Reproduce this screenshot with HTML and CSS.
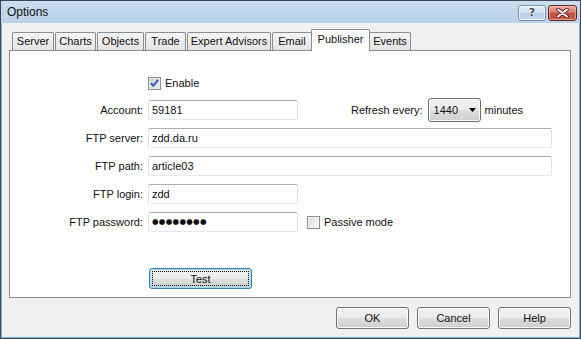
FILE: index.html
```html
<!DOCTYPE html>
<html lang="en">
<head>
<meta charset="utf-8">
<title>Options</title>
<link rel="stylesheet" href="styles.css">
</head>
<body>
<div class="window">
  <div class="titlebar">
    <span class="title">Options</span>
    <div class="title-buttons">
      <div class="tbtn tbtn-help">?</div>
      <div class="tbtn tbtn-close">
        <svg width="13" height="10" viewBox="0 0 13 10">
          <path d="M2 1.5 L11 8.5 M11 1.5 L2 8.5" stroke="#5a1d16" stroke-width="3.6" stroke-linecap="round" fill="none"/>
          <path d="M2 1.5 L11 8.5 M11 1.5 L2 8.5" stroke="#ffffff" stroke-width="2" stroke-linecap="round" fill="none"/>
        </svg>
      </div>
    </div>
  </div>
  <div class="client">
    <div class="tabs">
      <div class="tab tab-server">Server</div>
      <div class="tab tab-charts">Charts</div>
      <div class="tab tab-objects">Objects</div>
      <div class="tab tab-trade">Trade</div>
      <div class="tab tab-experts">Expert Advisors</div>
      <div class="tab tab-email">Email</div>
      <div class="tab tab-publisher selected">Publisher</div>
      <div class="tab tab-events">Events</div>
    </div>
    <div class="panel">
      <div class="row row-check">
        <span class="label"></span>
        <span class="checkbox checked">
          <svg width="11" height="11" viewBox="0 0 11 11"><path d="M2 5.2 L4.3 7.8 L9 1.8" stroke="#3a55a8" stroke-width="1.9" fill="none"/></svg>
        </span>
        <span class="check-text">Enable</span>
      </div>
      <div class="row">
        <span class="label">Account:</span>
        <div class="field short">59181</div>
        <span class="refresh-label">Refresh every:</span>
        <div class="select"><span>1440</span><svg width="7" height="4" viewBox="0 0 7 4"><path d="M0 0 H7 L3.5 4 Z" fill="#000"/></svg></div>
        <span class="minutes">minutes</span>
      </div>
      <div class="row">
        <span class="label">FTP server:</span>
        <div class="field long">zdd.da.ru</div>
      </div>
      <div class="row">
        <span class="label">FTP path:</span>
        <div class="field long">article03</div>
      </div>
      <div class="row">
        <span class="label">FTP login:</span>
        <div class="field short">zdd</div>
      </div>
      <div class="row">
        <span class="label">FTP password:</span>
        <div class="field short password">●●●●●●●●</div>
        <span class="checkbox passive"></span>
        <span class="check-text">Passive mode</span>
      </div>
      <div class="test-row">
        <div class="btn btn-test">Test</div>
      </div>
    </div>
    <div class="footer">
      <div class="btn">OK</div>
      <div class="btn">Cancel</div>
      <div class="btn">Help</div>
    </div>
  </div>
</div>
</body>
</html>
```

FILE: styles.css
```css
* { box-sizing: border-box; }
html, body { margin: 0; padding: 0; }
body {
  width: 581px;
  height: 339px;
  overflow: hidden;
  font-family: "Liberation Sans", Arial, sans-serif;
  font-size: 11px;
  color: #111;
  background: #f0f0f0;
}
.window {
  width: 581px;
  height: 339px;
  border: 1px solid #3d4653;
  display: flex;
  flex-direction: column;
  background: #f0f0f0;
}
.titlebar {
  height: 22px;
  flex: none;
  display: flex;
  justify-content: space-between;
  align-items: flex-start;
  padding: 0 3px 0 6px;
  background: linear-gradient(#cadcf0, #b9d1ea);
}
.title {
  font-size: 12px;
  line-height: 22px;
}
.title-buttons {
  display: flex;
  gap: 2px;
  margin-top: 4px;
}
.tbtn {
  height: 16px;
  border-radius: 3px;
  display: flex;
  align-items: center;
  justify-content: center;
}
.tbtn-help {
  width: 28px;
  border: 1px solid #7e93ad;
  background: linear-gradient(#e3edf8 0%, #cfdff1 50%, #b9cfe8 51%, #c6daee 100%);
  box-shadow: inset 0 0 0 1px rgba(255,255,255,0.6);
  font-family: "DejaVu Sans", sans-serif;
  font-weight: bold;
  font-size: 11px;
  color: #4a4f57;
  text-shadow: 0 0 1px #fff, 0 0 1px #fff;
  line-height: 14px;
}
.tbtn-close {
  width: 29px;
  border: 1px solid #6d2219;
  background: linear-gradient(#e9a99b 0%, #d7806e 45%, #c44d3a 50%, #c95a45 100%);
  box-shadow: inset 0 0 0 1px rgba(255,220,210,0.5);
}
.client {
  flex: 1;
  display: flex;
  flex-direction: column;
  border: 1px solid #72b4e2;
  border-top: none;
  padding: 6px 8px 8px 7px;
}
.tabs {
  height: 21px;
  flex: none;
  display: flex;
  align-items: flex-end;
  gap: 1px;
  padding-left: 3px;
}
.tab {
  height: 18px;
  border: 1px solid #898c95;
  border-bottom: none;
  border-radius: 2px 2px 0 0;
  background: linear-gradient(#f4f4f4, #e4e4e4);
  display: flex;
  align-items: center;
  justify-content: center;
  white-space: nowrap;
  padding-bottom: 1px;
}
.tab-server { width: 42px; }
.tab-charts { width: 41px; }
.tab-objects { width: 47px; }
.tab-trade { width: 41px; }
.tab-experts { width: 84px; }
.tab-email { width: 40px; }
.tab-publisher { width: 55px; }
.tab-events { width: 42px; }
.tab.selected {
  width: 59px;
  height: 22px;
  margin: 0 -2px -1px;
  position: relative;
  z-index: 1;
  background: #fff;
  align-items: flex-start;
  padding: 3px 0 0;
}
.panel {
  height: 248px;
  flex: none;
  border: 1px solid #898c95;
  background: #fff;
  padding-top: 19px;
}
.row {
  display: flex;
  align-items: center;
  height: 28px;
}
.row-check { height: 26px; }
.label {
  width: 133px;
  flex: none;
  text-align: right;
  margin-right: 5px;
}
.field {
  height: 20px;
  border: 1px solid;
  border-color: #abadb3 #dbdfe6 #e3e9ef #e2e3ea;
  border-radius: 2px;
  padding: 0 3px;
  line-height: 18px;
  background: #fff;
  white-space: nowrap;
  overflow: hidden;
}
.field.short { width: 150px; }
.field.long { width: 404px; }
.field.password {
  font-family: "DejaVu Sans", sans-serif;
  font-size: 7.5px;
  letter-spacing: 0.3px;
}
.refresh-label { margin-left: 53px; margin-right: 5px; }
.select {
  width: 53px;
  height: 24px;
  border: 1px solid #707070;
  border-radius: 3px;
  background: linear-gradient(#f2f2f2 0%, #ebebeb 50%, #dddddd 51%, #cfcfcf 100%);
  box-shadow: inset 0 0 0 1px #fbfbfb;
  display: flex;
  align-items: center;
  justify-content: space-between;
  padding: 0 4px 0 5px;
}
.minutes { margin-left: 4px; }
.checkbox {
  width: 13px;
  height: 13px;
  flex: none;
  border: 1px solid #8f8f8f;
  background: linear-gradient(135deg, #dadada, #fbfbfb);
  box-shadow: inset 0 0 0 1px #f2f2f2;
  display: flex;
  align-items: center;
  justify-content: center;
}
.checkbox.checked {
  background: linear-gradient(135deg, #c9ccd2, #eceef1);
  box-shadow: inset 0 0 0 1px #e6e8ea;
}
.checkbox.passive { margin-left: 9px; }
.check-text { margin-left: 4px; }
.test-row {
  margin-top: 32px;
  padding-left: 139px;
}
.btn {
  width: 73px;
  height: 22px;
  border: 1px solid #707070;
  border-radius: 3px;
  background: linear-gradient(#f2f2f2 0%, #ebebeb 50%, #dddddd 51%, #cfcfcf 100%);
  box-shadow: inset 0 0 0 1px #fcfcfc;
  display: flex;
  align-items: center;
  justify-content: center;
}
.btn-test {
  width: 103px;
  height: 21px;
  border-color: #3c7fb1;
  box-shadow: inset 0 0 0 1px #9fdcf7;
  outline: 1px dotted #000;
  outline-offset: -4px;
}
.footer {
  display: flex;
  justify-content: flex-end;
  gap: 8px;
  margin-top: 9px;
}
```
